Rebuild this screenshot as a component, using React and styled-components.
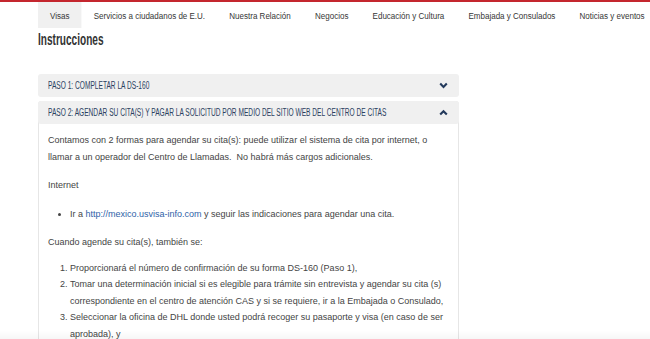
import styled, { createGlobalStyle } from "styled-components";

const GlobalStyle = createGlobalStyle`
  html, body {
    margin: 0;
    padding: 0;
    background: #ffffff;
  }
  body {
    width: 650px;
    height: 339px;
    overflow: hidden;
  }
  body::after {
    content: "";
    position: fixed;
    left: 0;
    right: 0;
    bottom: 0;
    height: 9px;
    background: linear-gradient(to bottom, rgba(0, 0, 0, 0), rgba(0, 0, 0, 0.03));
    pointer-events: none;
  }
`;

const sans = `"Liberation Sans", Arial, sans-serif`;

const Page = styled.div`
  border-top: 2px solid #c4262e;
  padding-left: 38px;
`;

// the site uses a condensed face; squeeze Arial-metric text to match
const Nav = styled.nav`
  display: flex;
  height: 26px;
  transform: scaleX(0.835);
  transform-origin: left center;
`;

const NavItem = styled.a`
  display: flex;
  align-items: center;
  padding: 1px 14.5px 0;
  font-family: ${sans};
  font-size: 9.6px;
  color: #363636;
  white-space: nowrap;
  background: ${(p) => (p.$active ? "#f0f0f0" : "transparent")};
`;

const Title = styled.h1`
  margin: 2px 0 0;
  font-family: ${sans};
  font-weight: 700;
  font-size: 16px;
  line-height: 19px;
  color: #333;
  transform: scaleX(0.63);
  transform-origin: left center;
  white-space: nowrap;
`;

const Accordion = styled.div`
  width: 421px;
  margin-top: 25px;
  display: flex;
  flex-direction: column;
  gap: 3px;
`;

const Panel = styled.div`
  border-radius: 3px;
  border: 1px solid ${(p) => (p.$open ? "#e6e6e6" : "transparent")};
  background: #fff;
`;

const PanelHead = styled.div`
  display: flex;
  align-items: center;
  height: 23px;
  margin: -1px -1px 0;
  padding: 0 11px 0 10px;
  background: #f0f0f0;
  border-radius: 3px;
`;

const HeadLabel = styled.span`
  flex: 1;
  min-width: 0;
  white-space: nowrap;
  font-family: ${sans};
  font-size: 10px;
  text-transform: uppercase;
  color: #2b4161;
  transform: scaleX(0.66);
  transform-origin: left center;
`;

const PanelBody = styled.div`
  padding: 8px 9px 0;
  font-family: ${sans};
  font-size: 9px;
  line-height: 16.5px;
  color: #444;
`;

const Para = styled.p`
  margin: 0 0 ${(p) => p.$after ?? 11.5}px;
`;

const Bullets = styled.ul`
  margin: 0 0 11.5px;
  padding-left: 22px;
`;

const Steps = styled.ol`
  margin: 0;
  padding-left: 22px;
`;

const Link = styled.a`
  color: #2f62a8;
  text-decoration: none;
`;

function Chevron({ up }) {
  return (
    <svg width="9" height="7" viewBox="0 0 9 7">
      <polyline
        points={up ? "1.2,5.6 4.5,2.2 7.8,5.6" : "1.2,1.6 4.5,5 7.8,1.6"}
        fill="none"
        stroke="#233a5c"
        strokeWidth="2.1"
      />
    </svg>
  );
}

const navItems = [
  "Visas",
  "Servicios a ciudadanos de E.U.",
  "Nuestra Relación",
  "Negocios",
  "Educación y Cultura",
  "Embajada y Consulados",
  "Noticias y eventos",
];

export default function App() {
  return (
    <>
      <GlobalStyle />
      <Page>
        <Nav>
          {navItems.map((item, i) => (
            <NavItem key={item} $active={i === 0}>
              {item}
            </NavItem>
          ))}
        </Nav>
        <Title>Instrucciones</Title>
        <Accordion>
          <Panel>
            <PanelHead>
              <HeadLabel>Paso 1: Completar la DS-160</HeadLabel>
              <Chevron />
            </PanelHead>
          </Panel>
          <Panel $open>
            <PanelHead>
              <HeadLabel>
                Paso 2: Agendar su cita(s) y pagar la solicitud por medio del
                sitio web del centro de citas
              </HeadLabel>
              <Chevron up />
            </PanelHead>
            <PanelBody>
              <Para>
                Contamos con 2 formas para agendar su cita(s): puede utilizar el
                sistema de cita por internet, o llamar a un operador del Centro
                de Llamadas.&nbsp; No habrá más cargos adicionales.
              </Para>
              <Para $after={12.5}>Internet</Para>
              <Bullets>
                <li>
                  Ir a <Link href="#">http://mexico.usvisa-info.com</Link> y
                  seguir las indicaciones para agendar una cita.
                </li>
              </Bullets>
              <Para $after={9.5}>Cuando agende su cita(s), también se:</Para>
              <Steps>
                <li>
                  Proporcionará el número de confirmación de su forma DS-160
                  (Paso 1),
                </li>
                <li>
                  Tomar una determinación inicial si es elegible para trámite
                  sin entrevista y agendar su cita (s) correspondiente en el
                  centro de atención CAS y si se requiere, ir a la Embajada o
                  Consulado,
                </li>
                <li>
                  Seleccionar la oficina de DHL donde usted podrá recoger su
                  pasaporte y visa (en caso de ser aprobada), y
                </li>
              </Steps>
            </PanelBody>
          </Panel>
        </Accordion>
      </Page>
    </>
  );
}
